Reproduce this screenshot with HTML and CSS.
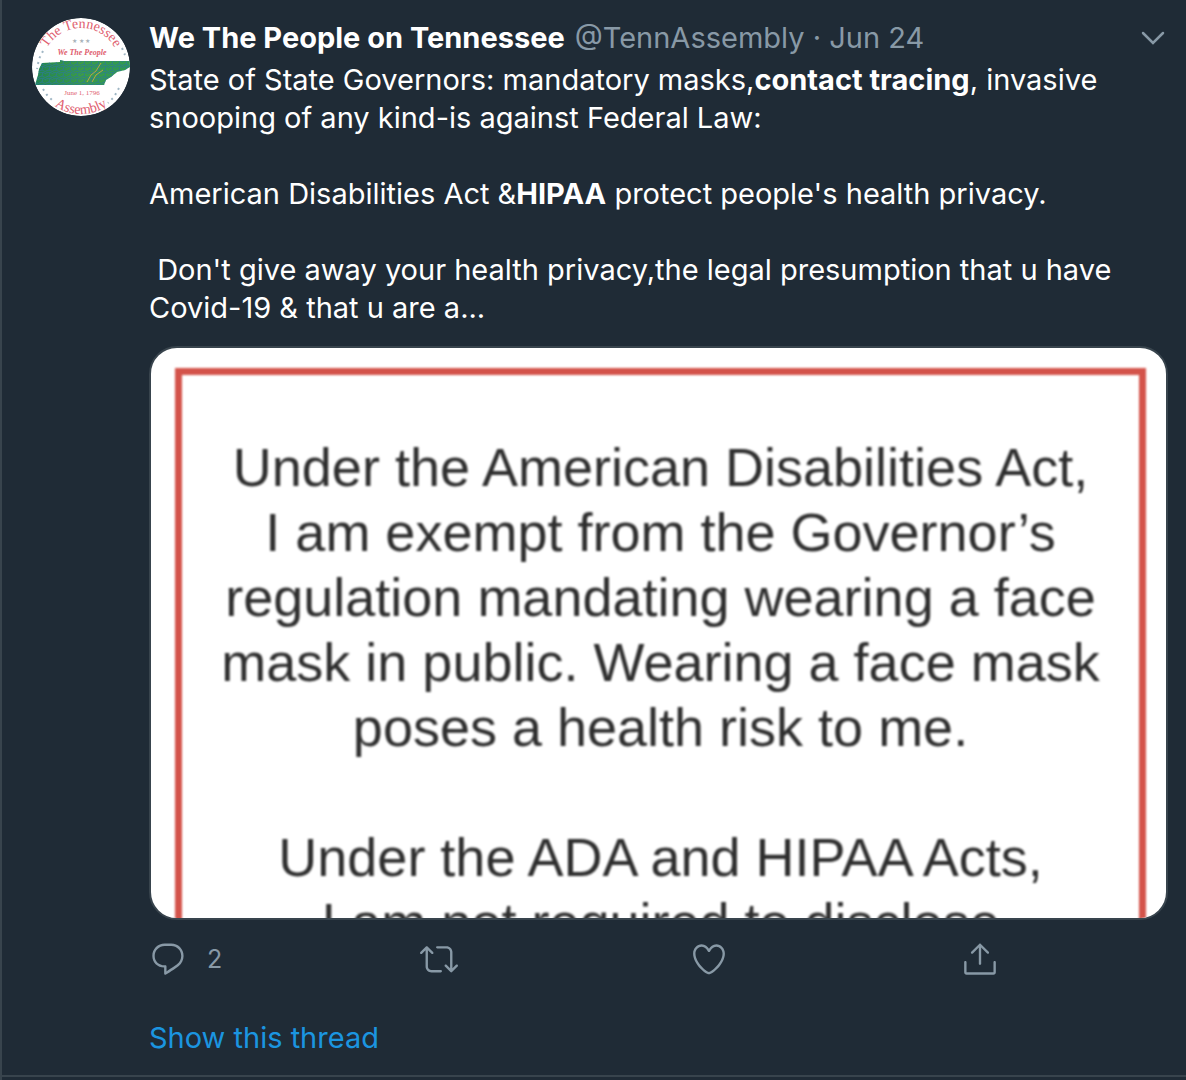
FILE: index.html
```html
<!doctype html>
<html lang="en">
  <head>
    <meta charset="utf-8">
    <meta name="viewport" content="width=device-width, initial-scale=1">
    <title>We The People on Tennessee</title>
    <link rel="stylesheet" href="styles.css">
  </head>
  <body>
    <article class="tweet">
      <a class="avatar" href="#" aria-label="We The People on Tennessee">
        <svg viewBox="0 0 98 98">
          <defs>
            <path id="arc-top" d="M10 49a39 39 0 0 1 78 0"/>
            <path id="arc-bottom" d="M2 49a47 47 0 0 0 94 0"/>
            <pattern id="counties" width="7" height="6" patternUnits="userSpaceOnUse">
              <path d="M0 1l4-1 3 2M4 0l-1 4 4 2M0 5l3-1" fill="none" stroke="#2b7a94" stroke-width=".8"/>
            </pattern>
            <linearGradient id="land">
              <stop offset="0" stop-color="#23854f"/>
              <stop offset=".5" stop-color="#3b9c48"/>
              <stop offset="1" stop-color="#2f9a50"/>
            </linearGradient>
          </defs>
          <circle cx="49" cy="49" r="49" fill="#fff"/>
          <text class="seal seal-ring"><textPath href="#arc-top" startOffset="50%">The Tennessee</textPath></text>
          <text class="seal seal-ring"><textPath href="#arc-bottom" startOffset="50%">Assembly</textPath></text>
          <text class="seal seal-stars" x="49" y="25">★ ★ ★</text>
          <text class="seal seal-motto" x="50" y="37">We The People</text>
          <text class="seal seal-date" x="50" y="77">June 1, 1796</text>
          <path d="M10 45l18-1v-2l4 1 66 0v6l-5 3-8 2-6 5-5 3-2 5H3l3-10 1-6z" fill="url(#land)"/>
          <path d="M10 45l18-1v-2l4 1 66 0v6l-5 3-8 2-6 5-5 3-2 5H3l3-10 1-6z" fill="url(#counties)"/>
          <path d="M55 64l4-7 5-4 5-8M60 64l4-7 7-5" fill="none" stroke="#b9a943" stroke-width="1"/>
          <path d="M11 33l-4 8-2 10M90 30l3 7M11 71l4 6 7 7M87 70l-5 9-6 6" fill="none" stroke="#9fb6c4" stroke-width="2" stroke-dasharray="2 4"/>
        </svg>
      </a>
      <div class="content">
        <header class="header">
          <a class="name" href="#">We The People on Tennessee</a>
          <span class="meta">@TennAssembly · Jun 24</span>
          <button class="more" type="button" aria-label="More">
            <svg viewBox="0 0 24 24"><path d="M4 8l8 8 8-8"/></svg>
          </button>
        </header>
        <p class="text">State of State Governors: mandatory masks,<b>contact tracing</b>, invasive
snooping of any kind-is against Federal Law:

American Disabilities Act &amp;<b>HIPAA</b> protect people's health privacy.

 Don't give away your health privacy,the legal presumption that u have
Covid-19 &amp; that u are a...</p>
        <figure class="photo">
          <div class="notice">
            <p>Under the American Disabilities Act,<br>
            I am exempt from the Governor’s<br>
            regulation mandating wearing a face<br>
            mask in public. Wearing a face mask<br>
            poses a health risk to me.</p>
            <p>Under the ADA and HIPAA Acts,<br>
            I am not required to disclose</p>
          </div>
        </figure>
        <div class="actions">
          <button class="action" type="button" aria-label="Reply, 2 replies">
            <svg viewBox="0 0 24 24"><path d="M14.046 2.242l-4.148-.01h-.002c-4.374 0-7.8 3.427-7.8 7.802 0 4.098 3.186 7.206 7.465 7.37v3.828c0 .108.044.286.12.403.142.225.384.347.632.347.138 0 .277-.038.402-.118.264-.168 6.473-4.14 8.088-5.506 1.902-1.61 3.04-3.97 3.043-6.312v-.017c-.006-4.367-3.43-7.787-7.8-7.788zm3.787 12.972c-1.134.96-4.862 3.405-6.772 4.643V16.67c0-.414-.335-.75-.75-.75h-.396c-3.66 0-6.318-2.476-6.318-5.886 0-3.534 2.768-6.302 6.3-6.302l4.147.01h.002c3.532 0 6.3 2.766 6.302 6.296-.003 1.91-.942 3.844-2.514 5.176z"/></svg>
            <span>2</span>
          </button>
          <button class="action" type="button" aria-label="Retweet">
            <svg viewBox="0 0 24 24"><path d="M23.77 15.67c-.292-.293-.767-.293-1.06 0l-2.22 2.22V7.65c0-2.068-1.683-3.75-3.75-3.75h-5.85c-.414 0-.75.336-.75.75s.336.75.75.75h5.85c1.24 0 2.25 1.01 2.25 2.25v10.24l-2.22-2.22c-.293-.293-.768-.293-1.06 0s-.294.768 0 1.06l3.5 3.5c.145.147.337.22.53.22s.383-.072.53-.22l3.5-3.5c.294-.292.294-.767 0-1.06zm-10.66 3.28H7.26c-1.24 0-2.25-1.01-2.25-2.25V6.46l2.22 2.22c.148.147.34.22.532.22s.384-.073.53-.22c.293-.293.293-.768 0-1.06l-3.5-3.5c-.293-.294-.768-.294-1.06 0l-3.5 3.5c-.294.292-.294.767 0 1.06s.767.293 1.06 0l2.22-2.22V16.7c0 2.068 1.683 3.75 3.75 3.75h5.85c.414 0 .75-.336.75-.75s-.337-.75-.75-.75z"/></svg>
          </button>
          <button class="action" type="button" aria-label="Like">
            <svg viewBox="0 0 24 24"><path d="M12 21.638h-.014C9.403 21.59 1.95 14.856 1.95 8.478c0-3.064 2.525-5.754 5.403-5.754 2.29 0 3.83 1.58 4.646 2.73.814-1.148 2.354-2.73 4.645-2.73 2.88 0 5.404 2.69 5.404 5.755 0 6.376-7.454 13.11-10.037 13.157H12zM7.354 4.225c-2.08 0-3.903 1.988-3.903 4.255 0 5.74 7.034 11.596 8.55 11.658 1.518-.062 8.55-5.917 8.55-11.658 0-2.267-1.823-4.255-3.903-4.255-2.528 0-3.94 2.936-3.952 2.965-.23.562-1.156.562-1.387 0-.014-.03-1.425-2.965-3.954-2.965z"/></svg>
          </button>
          <button class="action" type="button" aria-label="Share">
            <svg viewBox="0 0 24 24"><path d="M17.53 7.47l-5-5c-.293-.293-.768-.293-1.06 0l-5 5c-.294.293-.294.768 0 1.06s.767.294 1.06 0l3.72-3.72V15c0 .414.336.75.75.75s.75-.336.75-.75V4.81l3.72 3.72c.146.147.338.22.53.22s.384-.072.53-.22c.293-.293.293-.767 0-1.06z"/><path d="M20.5 21.944H3.5C2.6 21.944 2 21.3 2 20.444V14c0-.414.336-.75.75-.75s.75.336.75.75v6.444h17V14c0-.414.336-.75.75-.75s.75.336.75.75v6.444c0 .856-.6 1.5-1.5 1.5z"/></svg>
          </button>
        </div>
        <a class="thread" href="#">Show this thread</a>
      </div>
    </article>
  </body>
</html>
```
FILE: styles.css
```css
*,*:before,*:after {
  margin: 0;
  padding: 0;
  box-sizing: border-box;
}

body {
  min-height: 100vh;
  border-left: 2px solid #38444d;
  background-color: #1f2b36;
  color: #fff;
  font-family: Inter, "Liberation Sans", sans-serif;
  font-size: 29px;
  line-height: 38px;
}

a {
  color: inherit;
  text-decoration: none;
}

button {
  border: 0;
  background: none;
  color: inherit;
  font: inherit;
  cursor: pointer;
}

svg {
  display: block;
  fill: currentColor;
}

.tweet {
  display: flex;
  gap: 19px;
  padding: 18px 18px 18px 30px;
  border-bottom: 2px solid #38444d;
}

.avatar {
  flex: none;
  width: 98px;
  height: 98px;
  border-radius: 50%;
  overflow: hidden;
}

.seal {
  fill: #e0606f;
  font-family: "Liberation Serif", serif;
  text-anchor: middle;
}

.seal-ring {
  font-size: 14px;
}

.seal-stars {
  fill: #a9b3ba;
  font-size: 6px;
}

.seal-motto {
  font-size: 8px;
  font-style: italic;
  font-weight: bold;
}

.seal-date {
  font-size: 7px;
}

.content {
  flex: 1;
  min-width: 0;
  padding-top: 1px;
}

.header {
  display: flex;
  gap: 10px;
  margin-bottom: 4px;
}

.name {
  font-weight: bold;
}

.meta {
  color: #8899a6;
}

.more {
  margin-left: auto;
  color: #8899a6;
}

.more svg {
  width: 30px;
  height: 30px;
  fill: none;
  stroke: currentColor;
  stroke-width: 2;
  stroke-linecap: round;
}

.text {
  white-space: pre-wrap;
}

.photo {
  height: 574px;
  margin-top: 19px;
  padding: 20px 20px 0 24px;
  border: 2px solid #38444d;
  border-radius: 28px;
  overflow: hidden;
  background-color: #fff;
}

/* the notice runs past the bottom of the photo */
.notice {
  height: 640px;
  padding-top: 60px;
  border: 7px solid #d4534a;
  color: #2e2e2e;
  font-family: "Liberation Sans", Arial, sans-serif;
  font-size: 54px;
  line-height: 65px;
  text-align: center;
  white-space: nowrap;
  filter: blur(1px);
}

.notice p + p {
  margin-top: 65px;
}

.actions {
  display: grid;
  grid-template-columns: repeat(3, 1fr) auto;
  max-width: 850px;
  margin-top: 20px;
  color: #8899a6;
}

.action {
  display: flex;
  align-items: center;
  gap: 20px;
  font-size: 25px;
}

.action svg {
  width: 38px;
  height: 38px;
}

.thread {
  display: block;
  margin-top: 41px;
  color: #1b95e0;
}
```
